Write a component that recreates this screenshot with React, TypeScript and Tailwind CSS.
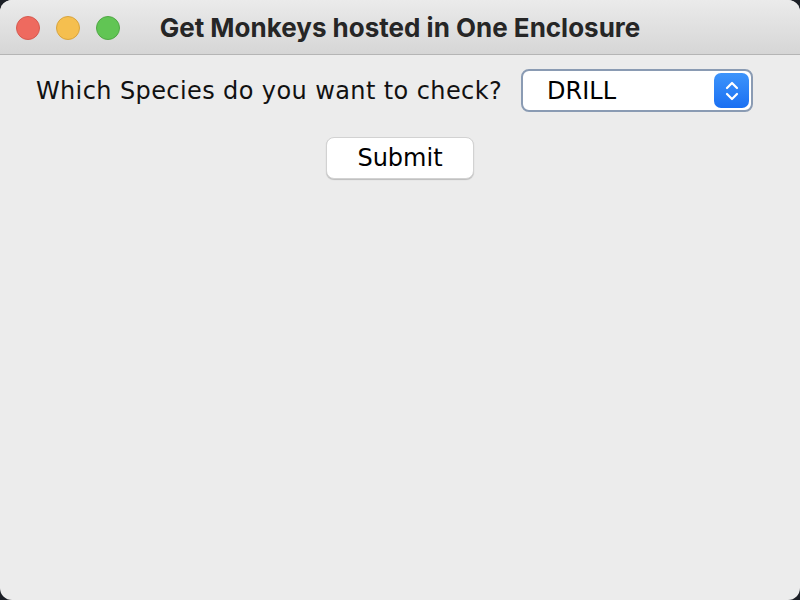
export default function App() {
  return (
    <div className="w-[800px] h-[600px] bg-[#1c1f26]">
      <div className="w-full h-full rounded-[12px] overflow-hidden bg-[#ececec] flex flex-col">
        {/* title bar */}
        <div className="relative h-[55px] shrink-0 bg-gradient-to-b from-[#ebebeb] to-[#d6d6d6] border-b border-[#b5b5b5] flex items-center justify-center">
          <div className="absolute left-[16px] top-[16px] flex gap-[16px]">
            <span className="w-[24px] h-[24px] rounded-full bg-[#ee6a5f] border border-[#d65a50]" />
            <span className="w-[24px] h-[24px] rounded-full bg-[#f5bf4f] border border-[#d8a43e]" />
            <span className="w-[24px] h-[24px] rounded-full bg-[#61c554] border border-[#50a845]" />
          </div>
          <span className="text-[26px] font-bold text-[#262626]" style={{ fontFamily: "Inter, 'Liberation Sans', sans-serif" }}>
            Get Monkeys hosted in One Enclosure
          </span>
        </div>

        {/* content */}
        <div className="flex flex-col items-center pt-[14px]" style={{ fontFamily: "'DejaVu Sans', sans-serif" }}>
          <div className="flex items-center gap-[19px] pr-[11px]">
            <span className="text-[24px] tracking-[0.4px] text-[#111]">Which Species do you want to check?</span>
            <div className="w-[232px] h-[43px] rounded-[8px] border-[2px] border-[#8a9bb3] bg-white flex items-center pl-[24px] pr-[2px]">
              <span className="flex-1 text-[24px] text-black">DRILL</span>
              <span className="w-[35px] h-[35px] rounded-[7px] bg-gradient-to-b from-[#3d94fb] to-[#1a6ff2] flex items-center justify-center">
                <svg width="16" height="24" viewBox="0 0 16 24" fill="none" stroke="white" strokeWidth="2.2" strokeLinecap="round" strokeLinejoin="round">
                  <path d="M3 9 L8 4 L13 9" />
                  <path d="M3 15 L8 20 L13 15" />
                </svg>
              </span>
            </div>
          </div>
          <button className="mt-[25px] w-[148px] h-[42px] rounded-[8px] bg-white border border-[#d2d2d2] shadow-[0_1px_1px_rgba(0,0,0,0.2)] text-[24px] text-black">
            Submit
          </button>
        </div>
      </div>
    </div>
  );
}
